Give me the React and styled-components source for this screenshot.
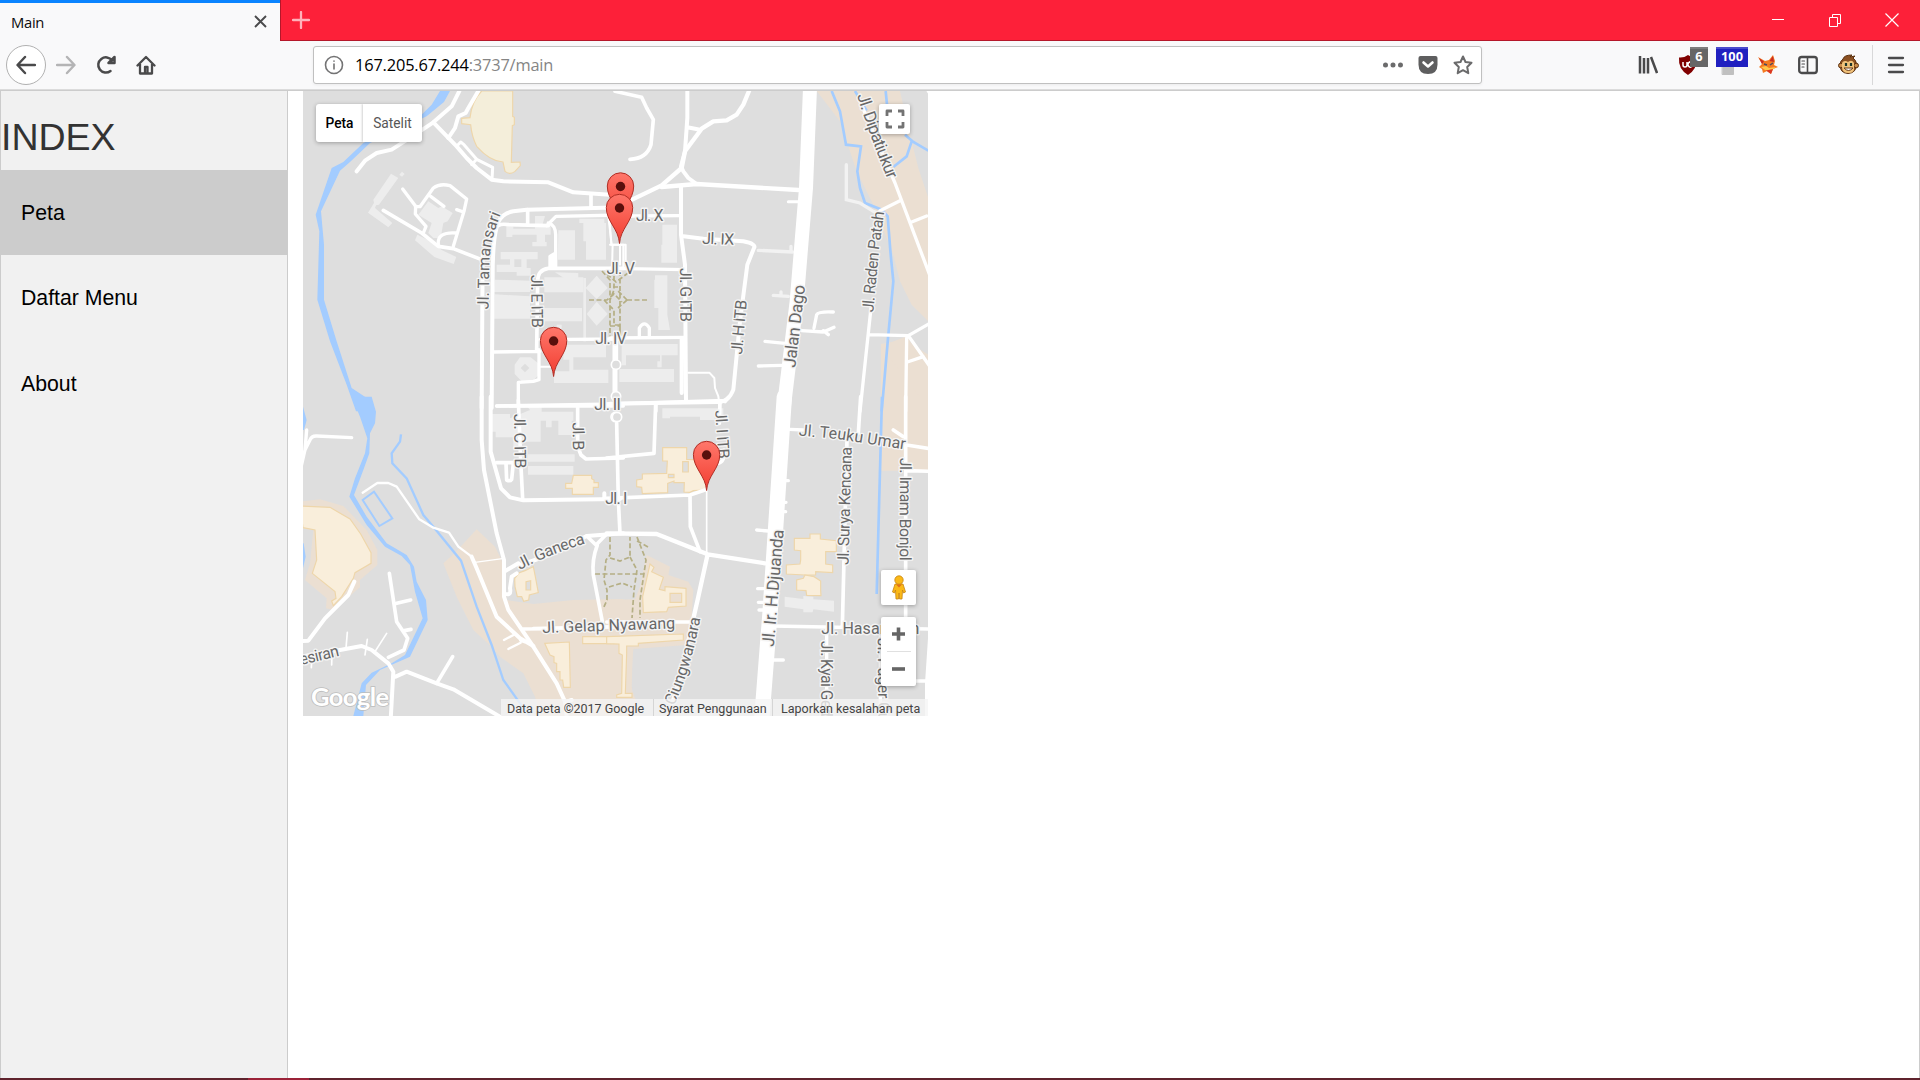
import React from "react";
import styled, { createGlobalStyle } from "styled-components";

const GlobalStyle = createGlobalStyle`
  * { box-sizing: border-box; }
  html, body { margin: 0; height: 100%; overflow: hidden; background: #fff; }
  svg { display: block; }
`;

const Window = styled.div`
  width: 1920px;
  height: 1080px;
  display: flex;
  flex-direction: column;
  font-family: "Liberation Sans", Arial, sans-serif;
  overflow: hidden;
`;

const TabStrip = styled.div`
  height: 41px;
  flex: none;
  display: flex;
  background: #fd2039;
`;

const Tab = styled.div`
  width: 280px;
  display: flex;
  align-items: center;
  justify-content: space-between;
  padding: 0 13px 1px 11px;
  background: #f9f9fa;
  border-top: 3px solid #0a84ff;
  font: 14.8px/20px "Open Sans", "Noto Sans", sans-serif;
  letter-spacing: -0.3px;
  color: #0c0c0d;
`;

const StripRest = styled.div`
  flex: 1;
  display: flex;
  justify-content: space-between;
  align-items: center;
  padding: 0 21px 0 11px;
  border-bottom: 1px solid #b5172a;
  border-left: 1px solid #b5172a;
`;

const WindowButtons = styled.div`
  display: flex;
  gap: 43px;
`;

const Toolbar = styled.div`
  height: 50px;
  flex: none;
  display: flex;
  align-items: center;
  padding: 0 3px 2px 6px;
  background: #f9f9fa;
  border-bottom: 1px solid #ccc;
  box-shadow: inset 0 -1px 0 #dcdcdc;
`;

const ToolButton = styled.div`
  position: relative;
  width: 40px;
  height: 40px;
  flex: none;
  display: flex;
  align-items: center;
  justify-content: center;
`;

const BackButton = styled(ToolButton)`
  background: #fff;
  border: 1px solid #b1b1b1;
  border-radius: 50%;
`;

const AddressBar = styled.div`
  width: 1169px;
  height: 38px;
  margin: 1px 146px 0 147px;
  display: flex;
  align-items: center;
  padding: 0 8px 0 10px;
  background: #fff;
  border: 1px solid #c0c0c0;
  border-radius: 3px;
  box-shadow: 0 1px 3px rgba(0, 0, 0, 0.06);
  font: 16.4px/22px "Open Sans", "Noto Sans", sans-serif;
`;

const Url = styled.div`
  flex: 1;
  margin-left: 11px;
  letter-spacing: -0.17px;
  color: #858585;
  white-space: nowrap;
`;

const Host = styled.span`
  color: #000;
`;

const AddressActions = styled.div`
  display: flex;
  gap: 15px;
`;

const Badge = styled.div`
  position: absolute;
  top: 2px;
  left: ${(p) => p.$left}px;
  width: ${(p) => p.$width}px;
  height: 20px;
  background: ${(p) => p.$color};
  border-top: 2px solid ${(p) => p.$edge};
  color: #fff;
  font: bold 12.8px/15px "Open Sans", sans-serif;
  text-align: center;
`;

const Separator = styled.div`
  width: 1px;
  height: 40px;
  margin: 0 3px 0 4px;
  background: #d8d8d9;
`;

const Page = styled.div`
  flex: 1;
  display: flex;
  min-height: 0;
  background: #fff;
  border-right: 1px solid #ccc;
`;

const Sidebar = styled.nav`
  width: 288px;
  background: #f1f1f1;
  border-left: 1px solid #ccc;
  border-right: 1px solid #ccc;
`;

const Heading = styled.h1`
  height: 79px;
  margin: 0;
  padding: 24px 0 0 0;
  font-size: 37.5px;
  font-weight: 400;
  line-height: 44px;
  color: #333;
`;

const MenuItem = styled.div`
  height: ${(p) => (p.$active ? 85 : 85.5)}px;
  display: flex;
  align-items: center;
  padding: 2px 0 0 20px;
  font-size: 21.25px;
  color: #000;
  background: ${(p) => (p.$active ? "#ccc" : "transparent")};
`;

const Content = styled.main`
  flex: 1;
  padding-left: 15px;
`;

const MapFrame = styled.div`
  position: relative;
  width: 625px;
  height: 625px;
  overflow: hidden;
  font-family: Roboto, sans-serif;
`;

const TypeSwitch = styled.div`
  position: absolute;
  left: 13px;
  top: 13px;
  display: flex;
  border-radius: 3px;
  box-shadow: 0 1px 4px rgba(0, 0, 0, 0.3);
  overflow: hidden;
`;

const TypeOption = styled.div`
  width: ${(p) => p.$width}px;
  height: 38px;
  display: flex;
  align-items: center;
  justify-content: center;
  background: #fff;
  box-shadow: -1px 0 2px rgba(0, 0, 0, 0.18);
  font-size: 13.75px;
  font-weight: ${(p) => (p.$active ? 500 : 400)};
  color: ${(p) => (p.$active ? "#000" : "#565656")};
`;

const Control = styled.div`
  position: absolute;
  left: ${(p) => p.$left}px;
  top: ${(p) => p.$top}px;
  width: ${(p) => p.$width}px;
  height: ${(p) => p.$height}px;
  display: flex;
  flex-direction: column;
  align-items: center;
  justify-content: center;
  background: #fff;
  border-radius: 2px;
  box-shadow: 0 1px 4px rgba(0, 0, 0, 0.3);
`;

const ZoomDivider = styled.div`
  width: 24px;
  height: 1px;
  background: #e0e0e0;
`;

const Attribution = styled.div`
  position: absolute;
  right: 0;
  bottom: 0;
  width: 427px;
  height: 17px;
  display: flex;
  align-items: stretch;
  background: rgba(245, 245, 245, 0.78);
  font-size: 12.5px;
  line-height: 19px;
  color: #444;
  white-space: nowrap;
`;

const Credit = styled.span`
  width: ${(p) => p.$width}px;
  padding-left: ${(p) => p.$indent}px;
  letter-spacing: ${(p) => p.$spacing || 0}px;
  border-left: ${(p) => (p.$first ? "none" : "1px solid #d5d5d5")};
`;

const Taskbar = styled.div`
  height: 2px;
  flex: none;
  padding-left: 248px;
  background: #5f232d;
`;

const TaskbarActive = styled.div`
  width: 61px;
  height: 2px;
  background: #9b2238;
`;

/* Map tiles: each is drawn at three times its size from its own origin. */
const TILES = [
  {
    origin: [300, 88],
    land: [],
    water: ["M420 9H450L432 42L380 85L210 165L150 222L120 248L63 370L72 470V635L110 760L155 900L215 940L222 970H168L140 890L90 760L52 635L58 430L47 380L95 240L130 222L190 165L360 85L395 50Z"],
    stream: [],
    grey: [
      "M273 257L295 270L237 350L228 352L225 360L277 405L265 418L204 374L222 345L220 335Z", "M306 251L314 258L306 266L298 260Z",
      "M352 440L392 460L425 486L469 507L461 528L403 507L345 457Z",
      "M385 340L415 360L425 355L458 375L443 400L430 405L422 450L400 450L385 435L395 405L355 380Z",
      "M705 384H735L727 412H752V440H735V462H740V475H697V462H710V440H637V447H619V415H640V422H705Z",
      "M602 492H713V514H680V540H692V563H650V552H590V530H630V514H602Z M643 514V537H664V514Z",
      "M775 427H825V515H773Z", "M838 392H913V405H918V515H858V460H850V405H838Z",
      "M584 575L690 578V612H582Z", "M584 619L690 625V692H582Z",
      "M733 568H850V613H733Z", "M733 660H846V700H733Z", "M765 553L835 555V570L795 572Z",
      "M890 563L923 600L890 633L857 600Z", "M890 641L923 678L890 713L860 678Z",
      "M850 570H858V760H850Z", "M790 770H918V808H820V845H925V885H762V850H808V815H790Z", "M770 710H785V722H770Z",
      "M660 808H692L717 828V860L697 880H665L644 858V830Z M675 827L662 840L675 853L688 840Z",
    ],
    yellow: ["M545 9H638V85L643 88V110L637 113L634 223L660 222L661 233L645 250Q630 262 615 250L609 222Q570 220 530 175Q515 145 512 110L485 107V91L510 89Q515 40 545 9Z"],
    roads: [
      [12, "M478 9L455 55L400 103L345 140L275 185L230 195L195 218L170 250"],
      [12, "M535 9L505 60L497 75L475 85L465 120L445 150"],
      [12, "M400 103L470 175L500 210L530 240L575 275L610 280L745 283L820 313L930 320L970 325"],
      [9, "M470 175L482 162L492 170L530 214L578 238L576 275M530 214L515 230"],
      [10, "M308 303L347 355L346 378L378 415L370 435M346 356H360L400 300Q420 285 450 293L500 333L492 370L460 475M470 365L490 372M392 325L432 355M415 470Q410 430 470 435"],
      [11, "M250 367L365 435L415 475L460 482L545 515"],
      [12, "M548 500L545 960"],
      [12, "M575 960L578 560Q578 440 596 400Q610 375 640 370L680 365L970 358"],
      [11, "M596 412Q605 407 625 410L745 413M683 365V410"],
      [10, "M740 413L768 385L970 381M745 405Q766 410 767 440V500M758 500V540M750 540V505L767 495V540"],
      [11, "M710 785L713 580Q713 545 745 541L970 541M873 320V358"],
      [10, "M578 792L720 790M720 755L970 753M717 785V875L700 880L655 883V955M590 954H970"],
      [6, "M717 836H760"],
      [6, "M928 385L934 470H970M938 470L936 541"],
      [9, "M942 755V920M950 755V815"],
    ],
  },
  {
    origin: [610, 88],
    land: ["M620 9H870L900 140L925 240L955 330V700L905 650L870 580L850 500L790 350L740 250L690 100Z", "M813 768L885 755L955 800V970H813Z", "M813 775L890 745L955 835V960Z"],
    water: [],
    stream: [[8, "M665 9L690 70L708 170L753 175L742 250L750 300L765 345L815 365L833 385L842 500L850 580L835 740L815 970"], [8, "M735 9L770 68M827 9L832 60M850 237L890 205L905 160M885 140L910 162L955 188"]],
    grey: ["M157 410H201V524H154V470H157Z", "M135 562H172V680L180 726H145V660H133V575H135Z", "M35 768H203V802H155V838H142V820H150V802H48V832H35Z", "M28 843H192V882H28Z"],
    yellow: [],
    roads: [
      [11, "M15 10L95 28L110 60L130 95L123 170Q110 212 60 214"],
      [12, "M232 0V90L225 190L213 235L220 250L235 270L260 288M232 118L270 125"],
      [13, "M417 9L400 50L380 80L350 97L310 100L275 122L225 190L215 240L155 292L60 338"],
      [13, "M155 297L260 288L565 306"],
      [42, "M600 0L588 300L560 640L520 970"],
      [9, "M535 341H565"],
      [12, "M213 298V440L225 530L228 940M215 750V915"],
      [10, "M60 384L210 383"],
      [12, "M220 445L280 452L400 460Q440 468 432 480L412 530L390 700L370 905Q355 945 320 942L0 947"],
      [10, "M0 541L225 545M0 750L225 748M138 950V970M88 748V720Q103 695 118 720V748"],
      [6, "M235 854H298L313 870L315 900L325 925L330 965M40 475V540M30 470V530M0 470H47V535M-5 385L5 470"],
      [9, "M15 755V815M18 845V910"],
      [10, "M465 760L525 766M445 834L515 832M575 728L640 732L672 718M640 728L655 740M612 720L620 680Q625 670 670 672"],
      [10, "M750 40L855 285L970 590M870 338L810 368M905 402L950 384"],
      [10, "M783 660L768 800L750 970M775 740L895 743L970 700M895 743L970 850M890 750L887 970M892 822L940 806M955 9L970 30"],
    ],
    paleRoads: ["M445 487L548 492M543 475V490M490 622L535 625M513 612V622M709 230V335L750 345L790 370L810 378"],
    rings: [[18, 830, 14], [18, 925, 14]],
  },
  {
    origin: [300, 400],
    land: [
      "M530 388L585 440L605 480L620 600L700 612L820 600L970 597V948H720L705 890L670 820L600 770L575 740L520 690L470 590L430 490L465 458Z",
      "M0 305L60 298L130 318L200 390L232 450V495L180 540V562L100 630L78 625L80 595L15 540L30 490L40 390L0 385Z",
    ],
    water: [
      "M155 -10H215L228 35L225 70L210 100L208 160L190 210L162 285L200 350L260 430L320 465L342 500L350 545L378 600L383 660L330 770L240 810L198 855L190 948H160L185 850L215 818L275 790L315 765L368 655L345 575L330 495L305 468L255 440L200 375L148 290L165 235L195 160L202 115L180 50Z",
      "M9 20L20 60L12 90H0V20Z", "M0 430H11L17 470L9 505H0Z",
    ],
    stream: [[7, "M303 103L300 125L275 160L277 190L320 235L370 345L400 380L483 482L530 620L575 735L610 840L660 910L690 948"], [6, "M188 300L222 275L277 355L238 378Z"]],
    grey: ["M575 42H630V55L690 30L680 17H725V35H820V62H815V105H775V62H755V82H738V62H722V125H655V145H640V112H587V95H575Z", "M684 163H824V185H684Z", "M684 198H820V224H684Z"],
    yellow: [
      "M0 318L90 322L150 357L182 402L213 458V490L165 518L160 535L125 590L100 617L95 603L108 595L105 575L37 520L50 480L45 390L9 383Z",
      "M820 226H875V236L882 240V248H895V262H880V283H817V265H797V250H815Z",
      "M644 535L658 518L675 512L690 505L700 500L706 530L715 578L688 585L686 600L671 604L665 590L652 590L645 560Z M678 545V570H692V542Z",
      "M734 730L808 726L811 862L791 862L788 840H780V815H770V790L762 788V770L750 765Z",
      "M848 710H960V731H848Z",
    ],
    roads: [
      [12, "M545 -10V120L552 210L590 400L612 480V590L625 630L700 740L770 850L795 905L800 950M800 905L815 900"],
      [12, "M572 -10V155L603 265L630 292L670 301L960 297M913 280V297"],
      [11, "M590 18L960 12M655 0L662 180L668 297M833 15V140L843 165L858 177L970 174M590 188H640M618 190L620 240Q630 245 635 238L640 190"],
      [10, "M20 90L15 150L0 215M15 150L30 120Q35 107 50 108L155 113"],
      [7, "M188 278L232 249H265L290 260L358 358L400 383L447 398L475 440L515 470"],
      [12, "M515 470L530 505L590 650L660 715L700 738M685 728L663 720"],
      [7, "M612 720L642 704M625 747L662 728"], [4, "M525 487L607 476"],
      [12, "M612 515L655 490M612 580Q635 590 630 565L635 530L650 520M660 495L750 465L860 408L970 400"],
      [11, "M860 408L888 435L920 402M892 435Q875 480 880 525L907 665M670 687L740 686M970 680L700 686"],
      [12, "M163 545L145 585L75 655L25 722L0 724"],
      [11, "M268 520L290 665L323 715L312 750L265 772M290 610L332 600M313 692L333 688"],
      [12, "M0 770L120 750L185 738L215 750L265 790L280 815L272 960M287 830L320 815L410 850L460 868L600 950"],
      [11, "M410 850L458 770"],
      [5, "M142 697L138 745M202 718L195 765M260 700L225 755M96 755L95 795M36 770L34 803"],
    ],
    rings: [[947, 51, 14]],
  },
  {
    origin: [610, 400],
    land: ["M813 -10H960V212H813Z", "M-20 600L75 598L90 560L110 465L180 500L175 525L235 545L250 570L245 650L230 735L70 747L65 860L85 900V948H-20Z"],
    water: [],
    stream: [[8, "M816 -10L800 582"]],
    grey: ["M157 25H340V50H314V60H270V50H180V55H157Z", "M524 590L580 597V588L610 590V598L672 602V635L610 628L608 637H580V628L524 620Z"],
    yellow: [
      "M158 143H230V178L290 180V270L250 272L240 277L222 276L223 248H192V243L173 250V278L97 281L95 262L80 260V240L97 237V222L170 220L172 183H158Z M218 185V216H235V185Z M175 223V233H192V223Z",
      "M600 402H631V417L679 422V455H647V492L668 495V518L617 515V525H585L529 522V495L570 492L572 480V452L553 450V415H600Z",
      "M585 525L612 530L632 543V572L633 587L590 586L588 572L560 570V540L580 535Z",
      "M120 492L132 502L125 515L160 532L148 568L165 572V560L228 565V618L175 622L170 635L100 638L98 590Z M180 580V607H215V580Z",
      "M-10 710L220 702V720L85 730V738H50V760L46 880H66V892H20V885L35 880L37 765L27 760V732L-10 731Z",
    ],
    roads: [
      [46, "M523 -10L480 640L455 960"],
      [11, "M-10 12L345 2M137 10L132 160L-10 174M20 70L25 300L30 400M330 5L328 70M355 -8L345 5"],
      [11, "M-10 295L240 285L285 270M240 285L241 380L270 455"],
      [5, "M290 260V460"], [11, "M325 190Q345 185 342 150"],
      [13, "M-10 400L140 402L293 463L465 490M293 463L265 590L240 700L220 800L190 900"],
      [10, "M250 666L-10 666M540 88L580 90M440 390L475 393M443 566H460M445 607H460M447 630H460M520 242H535M517 307H528M515 335H527M480 780H520"],
      [11, "M752 -10L745 100M711 120L697 680M490 678L960 687M887 -10V650M890 135L960 146M890 212L960 214M850 90L880 110"],
      [10, "M650 690V948M811 700V948M915 843H955M960 700L950 850V948"],
    ],
    rings: [[21, 51, 14]],
  },
];

const PATHS = [
  "M602 271L610 280V337M620 271V337M614 276V290L610 300M607 274L616 282L628 273M589 300H607L614 294L622 302M627 300H649M627 300L618 291M627 300L618 308M604 300L614 310V325H620V337M610 326H620M613 287H620",
  "M610 537V555L606 560L604 580L607 590V600L603 609M610 558L620 561L630 557V537M630 557L637 570L634 590L632 618M595 574H644M609 587L622 583L632 587M637 537L646 560L640 600V618M637 541L650 548",
];

const LABELS = [
  ["Jl. X", "M636 221.3H670", 27.5], ["Jl. IX", "M702 243.8L742 245.3", 32], ["Jl. V", "M606.5 273.5H640", 28.5],
  ["Jl. IV", "M595.3 344.2H632", 31.5], ["Jl. II", "M594.3 409.8H628", 26.5], ["Jl. I", "M605.3 504H632", 22],
  ["Jl. Tamansari", "M488.5 309.5L489.5 260Q491 235 504 207", 97], ["Jl. E ITB", "M531 275L532 340", 53],
  ["Jl. G ITB", "M680 268L680.5 340", 54], ["Jl. H ITB", "M741.9 354.7L747.9 290", 54.5],
  ["Jalan Dago", "M795.2 368L806.7 272", 83, 17], ["Jl. Raden Patah", "M873.2 312.5L879.2 248L885.7 202", 101],
  ["Jl. Dipatiukur", "M857 95.5Q868 131 892 191", 90, 17], ["Jl. C ITB", "M514 414L515 480", 54.5],
  ["Jl. B", "M572.5 422.5L573.2 460", 28], ["Jl. I ITB", "M715.3 410.5L719 470", 48.5],
  ["Jl. Teuku Umar", "M798.4 435.5L838 439L915 450.9", 107.5], ["Jl. Surya Kencana", "M848.5 565L852 437", 118],
  ["Jl. Imam Bonjol", "M900 457.7L899.6 575", 103], ["Jl. Ir. H.Djuanda", "M773.8 647L784.8 517", 117.5, 17],
  ["Jl. Ganeca", "M520 570Q550 553.5 595 540.5", 71], ["Jl. Gelap Nyawang", "M542.4 633L685 628", 133],
  ["Ciungwanara", "M674 706Q694 662 703 602", 92], ["Jl. Kyai Gede", "M821 640.7V740", 84],
  ["Jl. Pager Gunung", "M877.7 638L878.7 760", 118], ["Jl. Hasanudin", "M821.3 633.6H930", 98], ["esiran", "M301 665L345 654.5", 40],
];

const MARKERS = [[620.5, 222], [619.5, 243.5], [553.6, 376.5], [706.6, 490.5]];

const each = (fn) =>
  TILES.map((t, i) => (
    <g key={i} transform={`translate(${t.origin[0]} ${t.origin[1]}) scale(0.33333)`}>{fn(t)}</g>
  ));

function CampusMap() {
  return (
    <svg width="625" height="625" viewBox="303 91 625 625">
      <defs>
        <linearGradient id="pin" x1="0" y1="0" x2="0" y2="1">
          <stop offset="0" stopColor="#ff776b" />
          <stop offset="1" stopColor="#f23d30" />
        </linearGradient>
      </defs>
      <rect x="303" y="91" width="625" height="625" fill="#dedede" />
      {each((t) => t.land.map((d, i) => <path key={i} d={d} fill="#ebdfd2" />))}
      <path d="M633 652H700V716H642L632 690Z" fill="#dedede" />
      {each((t) => (
        <>
          {t.water.map((d, i) => <path key={`w${i}`} d={d} fill="#a3ccff" />)}
          {t.stream.map(([w, d], i) => <path key={`s${i}`} d={d} fill="none" stroke="#a3ccff" strokeWidth={w} />)}
          {t.grey.map((d, i) => <path key={`g${i}`} d={d} fill="#ededed" fillRule="evenodd" />)}
          {t.yellow.map((d, i) => (
            <path key={`y${i}`} d={d} fill={t.origin[1] < 100 ? "#f4eeda" : "#f9eedb"} stroke="#eed6aa" strokeWidth="3.5" fillRule="evenodd" />
          ))}
        </>
      ))}
      {PATHS.map((d, i) => <path key={i} d={d} fill="none" stroke="#b5af85" strokeWidth="1.7" strokeDasharray="5 2.5" />)}
      {each((t) => (
        <>
          {(t.paleRoads || []).map((d, i) => <path key={`p${i}`} d={d} fill="none" stroke="#f2f2f2" strokeWidth="10" strokeLinecap="round" />)}
          {t.roads.map(([w, d], i) => (
            <path key={`r${i}`} d={d} fill="none" stroke="#fff" strokeWidth={w} strokeLinecap="round" strokeLinejoin="round" />
          ))}
          {(t.rings || []).map(([x, y, r], i) => <circle key={`c${i}`} cx={x} cy={y} r={r} fill="#dedede" stroke="#fff" strokeWidth="5" />)}
        </>
      ))}
      {LABELS.map(([text, d, length, size], i) => (
        <g key={i}>
          <path id={`street${i}`} d={d} fill="none" />
          <text fontFamily="Roboto, sans-serif" fontSize={size || 16} fill="#686868" stroke="#f4f4f4" strokeWidth="2.8" strokeLinejoin="round" paintOrder="stroke" textLength={length}>
            <textPath href={`#street${i}`} textLength={length}>{text}</textPath>
          </text>
        </g>
      ))}
      {MARKERS.map(([x, y], i) => (
        <g key={i} transform={`translate(${x} ${y})`}>
          <path d="M0 0C-1-15-13.2-22-13.2-36A13.2 13.2 0 0 1 13.2-36C13.2-22 1-15 0 0Z" fill="url(#pin)" stroke="#b02d24" strokeWidth="1" />
          <circle cy="-35.5" r="4.7" fill="#590f0c" />
        </g>
      ))}
      <text x="311" y="705.5" fontFamily="Lato, sans-serif" fontSize="25.5" fontWeight="700" fill="#fff" stroke="#bdbdbd" strokeWidth="1.6" paintOrder="stroke" textLength="78">Google</text>
    </svg>
  );
}

const Line = ({ size = 20, color = "#4a4a4b", width = 2, d, fill = "none", cap = "round" }) => (
  <svg width={size} height={size} viewBox={`0 0 ${size} ${size}`} fill={fill} stroke={color} strokeWidth={width} strokeLinecap={cap} strokeLinejoin="round">
    <path d={d} />
  </svg>
);

const PocketIcon = () => (
  <svg width="20" height="20" viewBox="0 0 20 20">
    <path d="M2.5 1H17.5Q19.5 1 19.5 3V9.500Q19.500 19 10 19T.5 9.500V3Q.5 1 2.500 1Z" fill="#5e5e5f" />
    <path d="M5.500 7.500L10 11.500L14.500 7.500" fill="none" stroke="#fff" strokeWidth="2.6" strokeLinecap="round" strokeLinejoin="round" />
  </svg>
);

const ShieldIcon = () => (
  <svg width="20" height="20" viewBox="0 0 20 20">
    <path d="M10 0Q14 3 18.500 2.500Q19.500 14 10 20Q0 14 1 2.500Q6 3 10 0Z" fill="#800000" />
    <path d="M5 7V10Q5 12 7 12T9 10V7M14 7.500A2.500 2.500 0 1 0 14 11.500" fill="none" stroke="#fff" strokeWidth="1.500" />
  </svg>
);

const FoxIcon = () => (
  <svg width="20" height="20" viewBox="0 0 20 20">
    <path d="M0 2L7 6L11 5L15 0L17 6L16 10L20 12L15 14L13 19L9 16L5 18L4 14L1 12L4 9Z" fill="#f47a20" />
    <path d="M1 3L6 6.500L4 9ZM11.500 6L15 1L16 7Z" fill="#c92c22" />
    <path d="M3 12L8 11L11 13L18 12L13 16L7 15Z" fill="#ffc64a" />
    <path d="M6 9L9 10M12 10L15 8" stroke="#4b4a62" strokeWidth="1.500" />
    <path d="M8 15.500L13 19L15 14Z" fill="#da3824" />
  </svg>
);

const MonkeyIcon = () => (
  <svg width="21" height="21" viewBox="0 0 21 21">
    <path d="M5 5Q6 1 14 1L12 3L17 2L15 4Q18 6 18.500 10Q18.500 19 10 19.500Q2 19 2 11Q2 7 5 5Z" fill="#8c5122" stroke="#5b310f" />
    <circle cx="2.800" cy="11.500" r="2.300" fill="#c98b4b" stroke="#5b310f" />
    <circle cx="18.200" cy="11.500" r="2.300" fill="#c98b4b" stroke="#5b310f" />
    <path d="M10 8Q14 5 16 9V13Q17 19 10.500 19T4 13Q3 6 8 7Z" fill="#f0c27b" />
    <path d="M8 9V12M13 9V12" stroke="#1b352b" strokeWidth="2.200" />
    <path d="M6 14Q10.500 19 15 14Z" fill="#fff" stroke="#6b3b15" />
  </svg>
);

const Pegman = () => (
  <svg width="16" height="26" viewBox="0 0 16 26">
    <path d="M4 9H12L14.500 17L12.500 18L11.500 15L11 24H8.500L8 18L7.500 24H5L4.500 15L3.500 18L1.500 17Z" fill="#fbb917" stroke="#c78411" strokeWidth=".8" />
    <circle cx="8" cy="5" r="4.200" fill="#fbb917" stroke="#c78411" strokeWidth=".8" />
    <path d="M5 9.500H11L8 12.500Z" fill="#e2701b" />
  </svg>
);

export default function App() {
  return (
    <Window>
      <GlobalStyle />
      <TabStrip>
        <Tab>
          Main
          <Line size={13} width={1.9} cap="butt" d="M1 1L12 12M12 1L1 12" />
        </Tab>
        <StripRest>
          <Line size={18} color="#ffb1ba" width={2.3} d="M9 1V17M1 9H17" />
          <WindowButtons>
            <Line size={14} color="#fff" width={1} cap="butt" d="M1 6.500H13" />
            <Line size={14} color="#fff" width={1} cap="butt" d="M1.500 4.500H9.500V13.500H1.500ZM4.500 4.500V1.500H12.500V10.500H9.500" />
            <Line size={14} color="#fff" width={1.2} cap="butt" d="M.5 .5L13.500 13.500M13.500 .5L.5 13.500" />
          </WindowButtons>
        </StripRest>
      </TabStrip>
      <Toolbar>
        <BackButton><Line width={2.4} d="M19 10H2M9 2L1.500 10L9 18" /></BackButton>
        <ToolButton><Line width={2.4} color="#b4b4b5" d="M1 10H18M11 2L18.500 10L11 18" /></ToolButton>
        <ToolButton><Line width={2.5} d="M14.500 16A7.600 7.600 0 1 1 16 5.500M18.500 2V8H12.500Z" /></ToolButton>
        <ToolButton>
          <Line width={2.3} d="M1.500 10.500L10 2L18.500 10.500M4 9V18.500H16V9M9 18V12H11.500V18" />
        </ToolButton>
        <AddressBar>
          <Line size={20} width={1.6} color="#737374" d="M10 1.500A8.500 8.500 0 1 0 10 18.500A8.500 8.500 0 1 0 10 1.500M10 9V14M10 6V6.300" />
          <Url><Host>167.205.67.244</Host>:3737/main</Url>
          <AddressActions>
            <Line size={20} width={5} color="#6b6b6c" d="M2.500 10H2.510M10 10H10.010M17.500 10H17.510" />
            <PocketIcon />
            <Line size={20} width={2} color="#6b6b6c" d="M10 1.500L12.500 7L18.500 7.700L14.200 12L15.300 18.200L10 15.200L4.700 18.200L5.800 12L1.500 7.700L7.500 7Z" />
          </AddressActions>
        </AddressBar>
        <ToolButton><Line width={2.5} cap="butt" d="M2 1V18.500M6 3V18.500M10 3V18.500M13 2L19 18" /></ToolButton>
        <ToolButton>
          <ShieldIcon />
          <Badge $left={22} $width={18} $color="#666" $edge="#7d7d7d">6</Badge>
        </ToolButton>
        <ToolButton>
          <Line size={20} fill="#c0c0c0" color="#c0c0c0" width={1} d="M4.500 6H15.500V19.500H4.500Z" />
          <Badge $left={8} $width={32} $color="#2020c0" $edge="#4a4acc">100</Badge>
        </ToolButton>
        <ToolButton><FoxIcon /></ToolButton>
        <ToolButton>
          <svg width="20" height="20" viewBox="0 0 20 20" fill="none" stroke="#4a4a4b" strokeLinecap="round">
            <rect x="1.200" y="2" width="17.600" height="16" rx="2.500" strokeWidth="2.300" />
            <path d="M9.500 2V18" strokeWidth="1.600" />
            <path d="M4 6H6.500M4 9H6.500M4 12H6" strokeWidth="1.200" />
          </svg>
        </ToolButton>
        <ToolButton><MonkeyIcon /></ToolButton>
        <Separator />
        <ToolButton><Line width={2.3} d="M3 3H17M3 10H17M3 17H17" /></ToolButton>
      </Toolbar>
      <Page>
        <Sidebar>
          <Heading>INDEX</Heading>
          <MenuItem $active>Peta</MenuItem>
          <MenuItem>Daftar Menu</MenuItem>
          <MenuItem>About</MenuItem>
        </Sidebar>
        <Content>
          <MapFrame>
            <CampusMap />
            <TypeSwitch>
              <TypeOption $width={47} $active>Peta</TypeOption>
              <TypeOption $width={59}>Satelit</TypeOption>
            </TypeSwitch>
            <Control $left={576} $top={13} $width={31} $height={30}>
              <Line size={20} width={2.800} color="#737373" cap="butt" d="M2 7V2H7M13 2H18V7M18 13V18H13M7 18H2V13" />
            </Control>
            <Control $left={578} $top={479} $width={35} $height={35}><Pegman /></Control>
            <Control $left={578} $top={526} $width={35} $height={69}>
              <Line size={34} width={3.600} color="#666" cap="butt" d="M10 17H23M16.500 10.500V23.500" />
              <ZoomDivider />
              <Line size={34} width={3.600} color="#666" cap="butt" d="M10 17H23" />
            </Control>
            <Attribution>
              <Credit $width={152} $indent={6} $spacing={0} $first>Data peta ©2017 Google</Credit>
              <Credit $width={119} $indent={5}>Syarat Penggunaan</Credit>
              <Credit $width={156} $indent={8}>Laporkan kesalahan peta</Credit>
            </Attribution>
          </MapFrame>
        </Content>
      </Page>
      <Taskbar><TaskbarActive /></Taskbar>
    </Window>
  );
}
